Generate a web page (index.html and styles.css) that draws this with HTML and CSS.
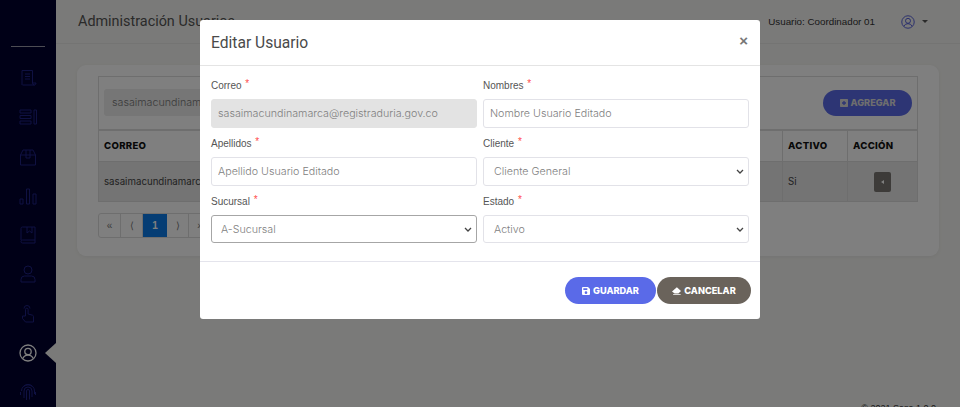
FILE: index.html
```html
<!DOCTYPE html>
<html lang="es">
<head>
<meta charset="utf-8">
<title>Administración Usuarios</title>
<link rel="stylesheet" href="styles.css">
</head>
<body>
<div class="app">
  <aside class="sidebar">
    <div class="side-rule"></div>
    <nav class="side-nav">
      <svg class="side-icon" viewBox="0 0 18 18"><path d="M3 16V1.500h10.500V14a2 2 0 0 0 2 2H3.500M6 5h5M6 7.500h5M6 10h5M13.500 14h3.500a2 2 0 0 1-1.500 2"/></svg>
      <svg class="side-icon" viewBox="0 0 18 18"><path d="M1 2h11v3H1zM1 7.500h11v3H1zM1 13h11v3H1zM15 2h2.500v14H15z"/></svg>
      <svg class="side-icon" viewBox="0 0 18 18"><path d="M1.500 7h15v10h-15zM1.500 7 4 2h10l2.500 5M7 2v8h4V2"/></svg>
      <svg class="side-icon" viewBox="0 0 18 18"><path d="M1 12h3v5H1zM7.500 2h3v15h-3zM14 7h3v10h-3z"/></svg>
      <svg class="side-icon" viewBox="0 0 18 18"><path d="M2 14V2.500A1.500 1.500 0 0 1 3.500 1H16v16H3.500A1.500 1.500 0 0 1 2 15.500 1.500 1.500 0 0 1 3.500 14H16M8 1v6l2.500-2 2.500 2V1"/></svg>
      <svg class="side-icon" viewBox="0 0 18 18"><circle cx="9" cy="5" r="4"/><path d="M2 17v-2.500A3.500 3.500 0 0 1 5.500 11h7a3.500 3.500 0 0 1 3.500 3.500V17z"/></svg>
      <svg class="side-icon" viewBox="0 0 18 18"><path d="M5 3.500a3 3 0 0 1 6 0M6.500 11V4.500a1.300 1.300 0 0 1 2.600 0V9l4.400 1.200a1.500 1.500 0 0 1 1 1.500V17H6.500L3.500 13.500V11h3z"/></svg>
      <svg class="side-icon side-icon-active" viewBox="0 0 18 18"><circle cx="9" cy="9" r="8"/><circle cx="9" cy="7.500" r="3.200"/><path d="M3.800 14.500a5.500 5 0 0 1 10.400 0"/></svg>
      <svg class="side-icon" viewBox="0 0 18 18"><path d="M4.500 3.500a7.500 7.500 0 0 1 9 0M2.500 8a6.500 6.500 0 0 1 13 0v3M1.500 12V9M5 15V8a4 4 0 0 1 8 0v6M7.500 17V8a1.500 1.500 0 0 1 3 0v8.500M16.500 9v3"/></svg>
    </nav>
    <div class="side-notch"></div>
  </aside>

  <div class="main">
    <header class="topbar">
      <h1 class="page-title">Administración Usuarios</h1>
      <div class="user-box">
        <span class="user-name">Usuario: Coordinador 01</span>
        <svg class="user-icon" viewBox="0 0 18 18"><circle cx="9" cy="9" r="8"/><circle cx="9" cy="7.500" r="3.200"/><path d="M3.800 14.500a5.500 5 0 0 1 10.400 0"/></svg>
        <span class="caret"></span>
      </div>
    </header>

    <section class="content">
      <div class="card">
        <table class="grid">
          <colgroup>
            <col>
            <col class="col-active">
            <col class="col-action">
          </colgroup>
          <thead>
            <tr class="tool-row">
              <th colspan="3">
                <div class="tools">
                  <input class="filter" type="text" value="sasaimacundinamarca@registraduria.gov.co" readonly>
                  <button class="btn btn-add" type="button">
                    <svg class="btn-icon" viewBox="0 0 12 12"><path fill-rule="evenodd" d="M1 0h10a1 1 0 0 1 1 1v10a1 1 0 0 1-1 1H1a1 1 0 0 1-1-1V1a1 1 0 0 1 1-1zm4 3v2H3v2h2v2h2V7h2V5H7V3z"/></svg>
                    AGREGAR
                  </button>
                </div>
              </th>
            </tr>
            <tr class="head-row">
              <th>CORREO</th>
              <th>ACTIVO</th>
              <th>ACCIÓN</th>
            </tr>
          </thead>
          <tbody>
            <tr class="data-row">
              <td>sasaimacundinamarca@registraduria.gov.co</td>
              <td>Si</td>
              <td class="action-cell"><span class="action-btn"><span class="action-tri"></span></span></td>
            </tr>
          </tbody>
        </table>
        <ul class="pager">
          <li>«</li><li>⟨</li><li class="pager-on">1</li><li>⟩</li><li>»</li>
        </ul>
      </div>
    </section>

    <footer class="foot">© 2021 Sasa 1.0.0</footer>
  </div>
</div>

<div class="backdrop">
  <div class="modal">
    <div class="modal-head">
      <h2 class="modal-title">Editar Usuario</h2>
      <span class="modal-close">×</span>
    </div>
    <form class="modal-body">
      <div class="field">
        <label class="lbl">Correo <em>*</em></label>
        <input class="ctl ctl-off" type="text" value="sasaimacundinamarca@registraduria.gov.co" readonly>
      </div>
      <div class="field">
        <label class="lbl">Nombres <em>*</em></label>
        <input class="ctl" type="text" value="Nombre Usuario Editado">
      </div>
      <div class="field">
        <label class="lbl">Apellidos <em>*</em></label>
        <input class="ctl" type="text" value="Apellido Usuario Editado">
      </div>
      <div class="field">
        <label class="lbl">Cliente <em>*</em></label>
        <select class="ctl sel"><option>Cliente General</option></select>
      </div>
      <div class="field">
        <label class="lbl">Sucursal <em>*</em></label>
        <select class="ctl sel sel-low sel-focus"><option>A-Sucursal</option></select>
      </div>
      <div class="field">
        <label class="lbl">Estado <em>*</em></label>
        <select class="ctl sel sel-low"><option>Activo</option></select>
      </div>
    </form>
    <div class="modal-foot">
      <button class="btn btn-save" type="button">
        <svg class="btn-icon" viewBox="0 0 12 12"><path fill-rule="evenodd" d="M1.500 0H9l3 3v7.500a1.500 1.500 0 0 1-1.500 1.500h-9A1.500 1.500 0 0 1 0 10.500v-9A1.500 1.500 0 0 1 1.500 0zM2 2v2.500h6V2zm4 4.500a2 2 0 1 0 0 4 2 2 0 0 0 0-4z"/></svg>
        GUARDAR
      </button>
      <button class="btn btn-cancel" type="button">
        <svg class="btn-icon btn-icon-wide" viewBox="0 0 12 10"><path d="M6.500 0 12 5 8.500 8.200H3.500L0 5.500zM1.500 9h10v1h-10z"/></svg>
        CANCELAR
      </button>
    </div>
  </div>
</div>
</body>
</html>
```

FILE: styles.css
```css
* { box-sizing: border-box; }
html, body { margin: 0; padding: 0; height: 100%; overflow: hidden; }
body { font-family: "Liberation Sans", Arial, sans-serif; background: #f5f5f2; color: #444; }

.app { display: flex; height: 407px; overflow: hidden; }

.sidebar { position: relative; flex: 0 0 56px; background: #00002e; display: flex; flex-direction: column; align-items: center; }
.side-rule { width: 34px; height: 1px; background: #9a9aa8; margin-top: 46px; }
.side-nav { display: flex; flex-direction: column; align-items: center; gap: 21.300px; margin-top: 22px; }
.side-icon { width: 18px; height: 18px; fill: none; stroke: #1f2285; stroke-width: 1; display: block; }
.side-icon-active { stroke: #fff; stroke-width: 1.300; }
.side-notch { position: absolute; right: 0; top: 343px; width: 0; height: 0; border-style: solid; border-width: 10px 11px 10px 0; border-color: transparent #f5f5f2 transparent transparent; }

.main { flex: 1; min-width: 0; height: 414px; display: flex; flex-direction: column; }
.topbar { height: 44px; flex: none; display: flex; align-items: center; justify-content: space-between; padding: 0 32px 0 22px; border-bottom: 1px solid #e9e9e6; }
.page-title { margin: 0; font: 400 14.400px Roboto, sans-serif; color: #555; }
.user-box { display: flex; align-items: center; }
.user-name { font-size: 9.800px; color: #333; }
.user-icon { width: 14px; height: 14px; margin-left: 26px; fill: none; stroke: #4b56d8; stroke-width: 1.200; }
.caret { width: 0; height: 0; margin-left: 7px; border-style: solid; border-width: 3px 3px 0; border-color: #555 transparent transparent; }

.content { padding: 21px 21px 0; }
.card { background: #fff; border-radius: 9px; height: 191px; padding: 11px 21px 0; box-shadow: 0 1px 4px rgba(0,0,0,.06); }

.grid { width: 100%; border-collapse: collapse; table-layout: fixed; font-size: 10px; }
.grid th, .grid td { border: 1px solid #ddd; padding: 0 5px; text-align: left; }
.tool-row th { height: 53px; border-bottom-width: 2px; font-weight: 400; }
.tools { display: flex; align-items: center; justify-content: space-between; }
.filter { width: 400px; height: 27px; border: 0; border-radius: 3px; background: #ececec; padding: 0 8px; font: 300 10.700px Inter, sans-serif; color: #777; }
.head-row th { height: 32px; font: 800 9.600px Inter, sans-serif; letter-spacing: .3px; color: #111; }
.col-active { width: 65px; }
.col-action { width: 70px; }
.data-row td { height: 40px; background: #e8e8e8; color: #444; font-family: Inter, sans-serif; font-size: 9.700px; white-space: nowrap; overflow: hidden; }
.grid td.action-cell { text-align: center; }
.action-btn { display: inline-flex; align-items: center; justify-content: center; width: 17px; height: 20px; border-radius: 2px; background: #7a7672; vertical-align: middle; }
.action-tri { width: 0; height: 0; border-style: solid; border-width: 2.500px 3px 2.500px 0; border-color: transparent #fff transparent transparent; }

.pager { display: inline-flex; list-style: none; margin: 11px 0 0; padding: 0; height: 25px; border: 1px solid #ddd; border-radius: 3px; font-size: 10px; color: #777; overflow: hidden; }
.pager li { width: 22px; display: flex; align-items: center; justify-content: center; border-right: 1px solid #ddd; }
.pager li:last-child { border-right: 0; }
.pager .pager-on { width: 24px; background: #0a7be8; color: #fff; font-weight: 700; border-right: 0; }

.foot { margin-top: auto; text-align: right; font-size: 9px; color: #333; padding-right: 24px; height: 11px; line-height: 11px; }

.backdrop { position: fixed; inset: 0; background: rgba(0,0,0,.5); display: flex; justify-content: center; align-items: flex-start; padding-top: 20px; }
.modal { width: 560px; height: 299px; background: #fff; border-radius: 3px; }
.modal-head { height: 46px; display: flex; align-items: center; justify-content: space-between; padding: 0 12px 0 11px; border-bottom: 1px solid #e4e4e4; }
.modal-title { margin: 0; font: 400 15.600px Roboto, sans-serif; color: #4a4a4a; }
.modal-close { font-size: 15px; font-weight: 700; color: #777; margin-top: -5px; }
.modal-body { display: grid; grid-template-columns: 266px 266px; column-gap: 6px; grid-auto-rows: 58px; padding: 12px 11px 0; height: 195px; }
.field { display: flex; flex-direction: column; }
.lbl { height: 21px; font-size: 10px; line-height: 15px; color: #555; }
.lbl em { font-style: normal; color: #ff4d4d; position: relative; top: -2px; margin-left: 1px; }
.ctl { height: 29px; width: 100%; border: 1px solid #e2e2e8; border-radius: 3px; background: #fff; padding: 0 6px; font: 300 10.700px Inter, sans-serif; color: #808080; }
.ctl-off { background: #e3e3e3; border-color: #e3e3e3; }
.sel { appearance: none; padding: 0 16px 0 10px; background-repeat: no-repeat; background-position: right 4px center; background-size: 8px 5px; background-image: url("data:image/svg+xml,%3Csvg xmlns='http://www.w3.org/2000/svg' viewBox='0 0 8 5'%3E%3Cpath d='M1 1l3 3 3-3' fill='none' stroke='%23444' stroke-width='1.300'/%3E%3C/svg%3E"); }
.sel-low { height: 28px; }
.sel-focus { border-color: #a6a6a6; padding-left: 9px; }

.modal-foot { display: flex; justify-content: flex-end; gap: 1px; padding: 15px 9px 0 0; border-top: 1px solid #e4e4ec; }
.btn { display: inline-flex; align-items: center; justify-content: center; gap: 3px; height: 27px; border: 0; border-radius: 14px; color: #fff; font: 800 9.200px Inter, sans-serif; padding: 0; }
.btn-icon { width: 8px; height: 8px; fill: currentColor; }
.btn-icon-wide { width: 9px; }
.btn-save { width: 91px; background: #5a6ae8; }
.btn-cancel { width: 94px; background: #6a635b; }
.btn-add { width: 89px; height: 26px; background: #5a6ae8; color: #ddd; }
```
